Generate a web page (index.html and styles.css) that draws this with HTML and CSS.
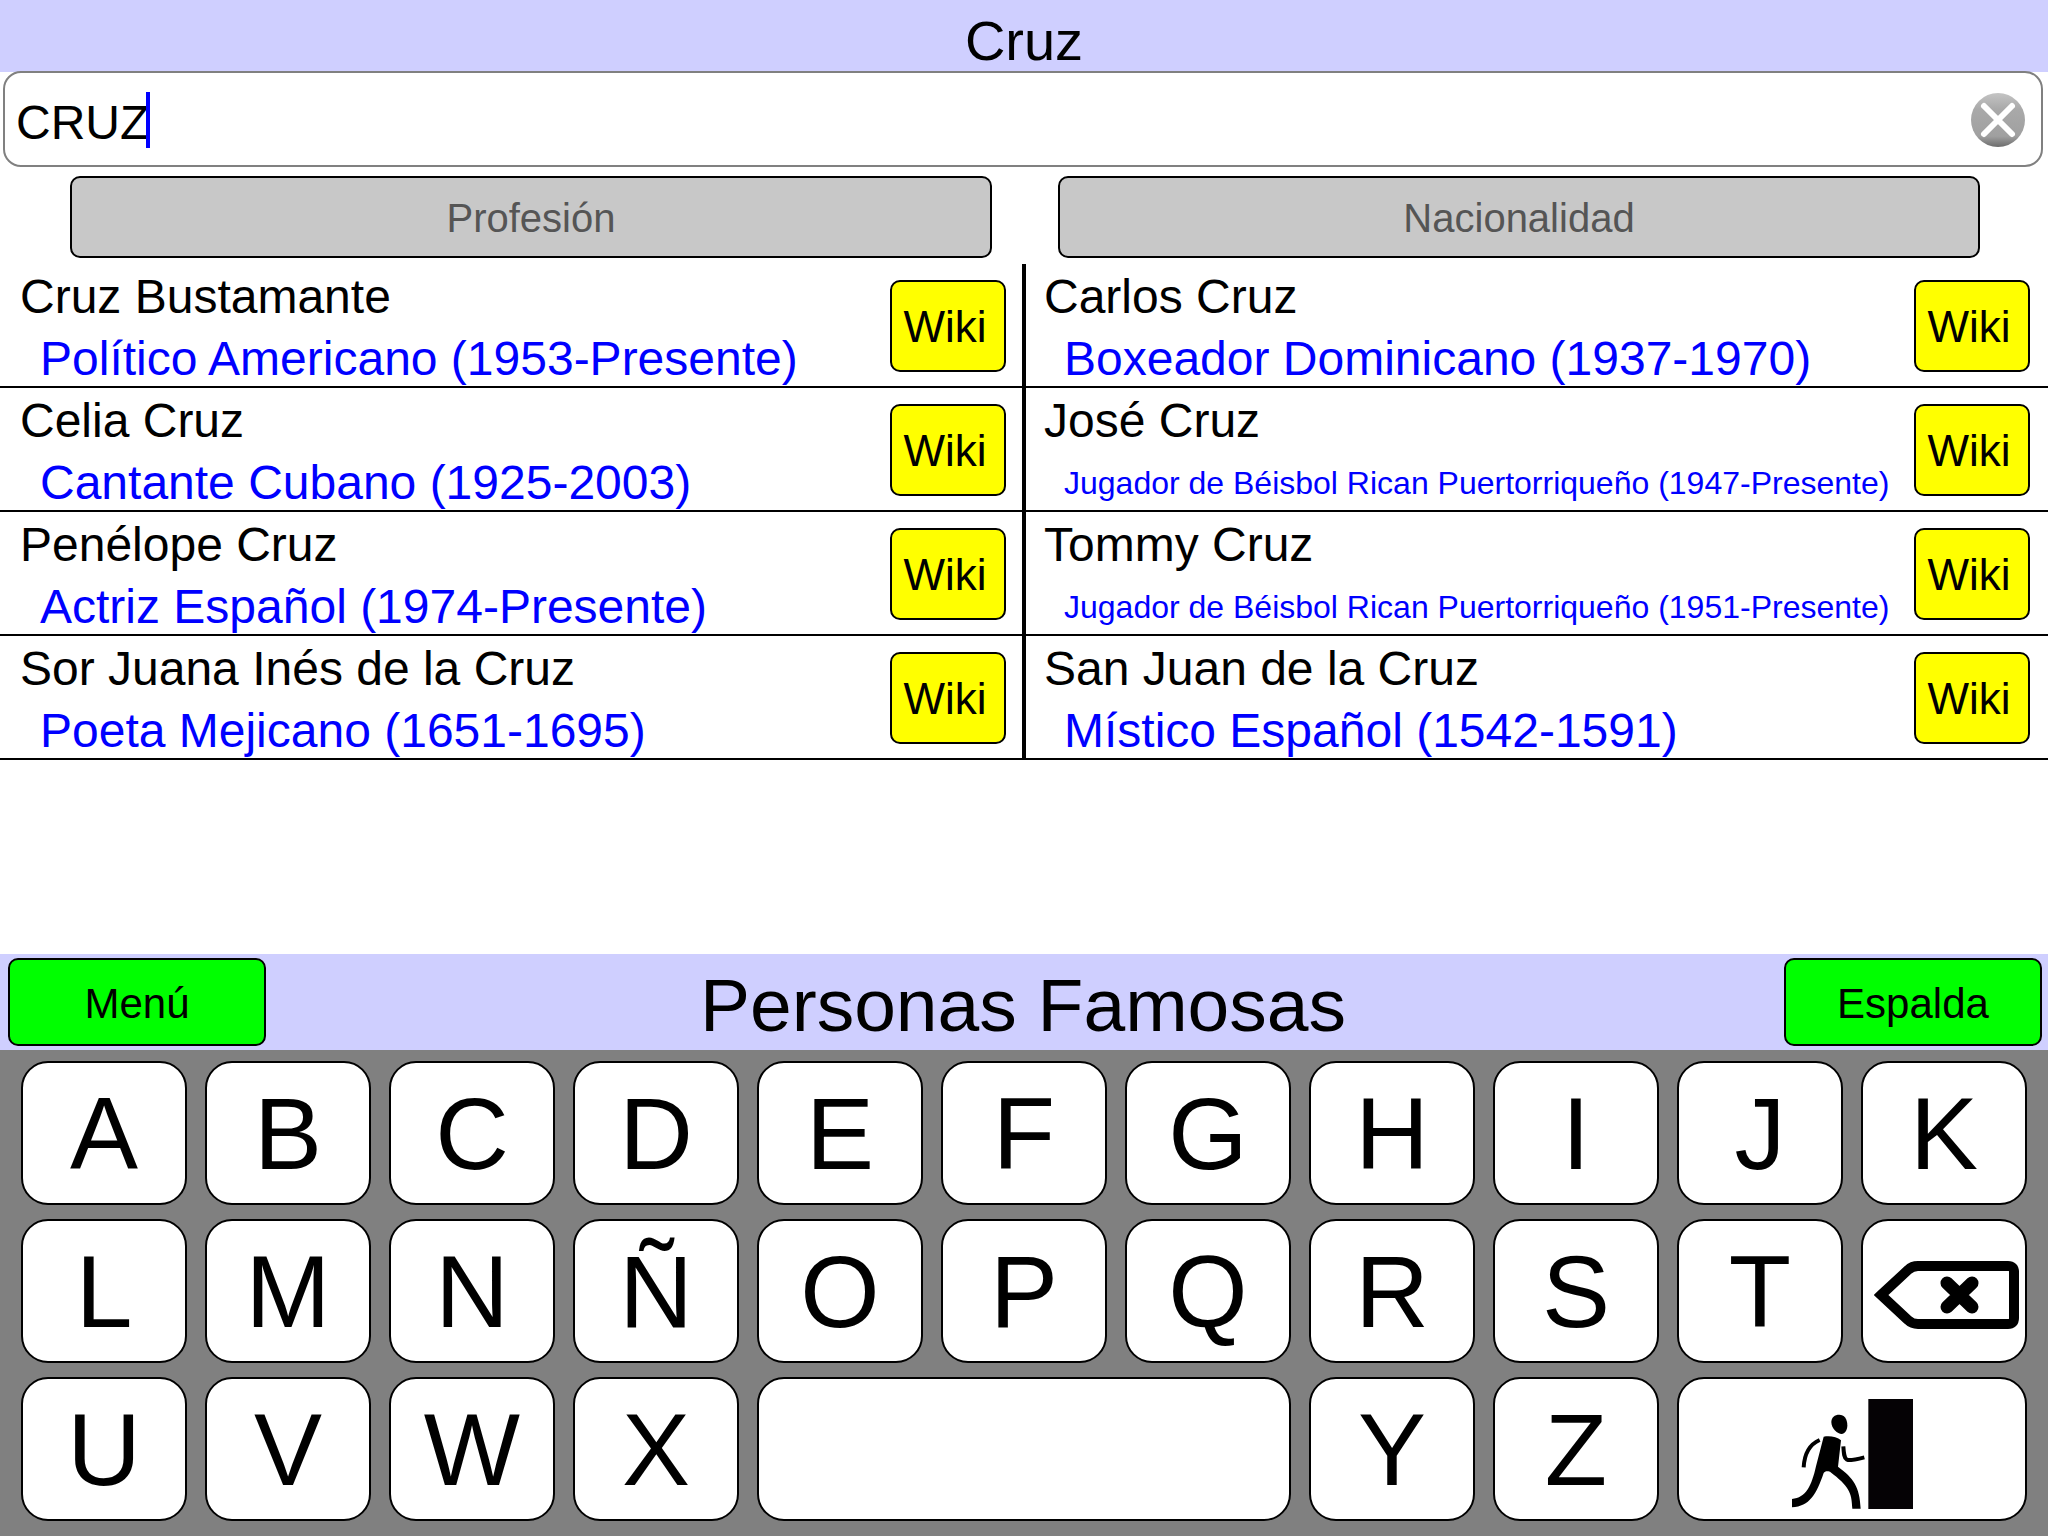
FILE: index.html
```html
<!DOCTYPE html>
<html lang="es">
<head>
    <meta charset="UTF-8">
    <meta name="viewport" content="width=device-width, initial-scale=1.0">
    <title>Personas Famosas</title>
    <link rel="stylesheet" href="styles.css">
</head>
<body>
    <header class="top">
        <h1>Cruz</h1>
    </header>

    <form class="search">
        <input type="text" class="search_txt" value="CRUZ" aria-label="Buscar" autocomplete="off" spellcheck="false">
        <span class="caret"></span>
        <button type="reset" class="clear" aria-label="Borrar">
            <svg viewBox="0 0 56 56">
                <defs>
                    <linearGradient id="gray" x1="0" y1="0" x2="0" y2="1">
                        <stop offset="0" stop-color="#c4c4c4"/>
                        <stop offset="0.3" stop-color="#a9a9a9"/>
                        <stop offset="0.8" stop-color="#a0a0a0"/>
                        <stop offset="1" stop-color="#6c6c6c"/>
                    </linearGradient>
                </defs>
                <circle cx="28" cy="28" r="27" fill="url(#gray)"/>
                <path d="M14 14 L42 42 M42 14 L14 42" stroke="#fff" stroke-width="6" stroke-linecap="round"/>
            </svg>
        </button>
    </form>

    <div class="filter">
        <button type="button" disabled>Profesión</button>
        <button type="button" disabled>Nacionalidad</button>
    </div>

    <main class="result">
        <ul class="lst">
            <li>
                <div class="person"><p class="name">Cruz Bustamante</p><p class="info">Político Americano (1953-Presente)</p></div>
                <button type="button" class="wiki">Wiki</button>
            </li>
            <li>
                <div class="person"><p class="name">Carlos Cruz</p><p class="info">Boxeador Dominicano (1937-1970)</p></div>
                <button type="button" class="wiki">Wiki</button>
            </li>
            <li>
                <div class="person"><p class="name">Celia Cruz</p><p class="info">Cantante Cubano (1925-2003)</p></div>
                <button type="button" class="wiki">Wiki</button>
            </li>
            <li>
                <div class="person"><p class="name">José Cruz</p><p class="info small">Jugador de Béisbol Rican Puertorriqueño (1947-Presente)</p></div>
                <button type="button" class="wiki">Wiki</button>
            </li>
            <li>
                <div class="person"><p class="name">Penélope Cruz</p><p class="info">Actriz Español (1974-Presente)</p></div>
                <button type="button" class="wiki">Wiki</button>
            </li>
            <li>
                <div class="person"><p class="name">Tommy Cruz</p><p class="info small">Jugador de Béisbol Rican Puertorriqueño (1951-Presente)</p></div>
                <button type="button" class="wiki">Wiki</button>
            </li>
            <li>
                <div class="person"><p class="name">Sor Juana Inés de la Cruz</p><p class="info">Poeta Mejicano (1651-1695)</p></div>
                <button type="button" class="wiki">Wiki</button>
            </li>
            <li>
                <div class="person"><p class="name">San Juan de la Cruz</p><p class="info">Místico Español (1542-1591)</p></div>
                <button type="button" class="wiki">Wiki</button>
            </li>
        </ul>
    </main>

    <nav class="bar">
        <button type="button">Menú</button>
        <h2>Personas Famosas</h2>
        <button type="button">Espalda</button>
    </nav>

    <div class="keyboard">
        <button type="button">A</button>
        <button type="button">B</button>
        <button type="button">C</button>
        <button type="button">D</button>
        <button type="button">E</button>
        <button type="button">F</button>
        <button type="button">G</button>
        <button type="button">H</button>
        <button type="button">I</button>
        <button type="button">J</button>
        <button type="button">K</button>

        <button type="button">L</button>
        <button type="button">M</button>
        <button type="button">N</button>
        <button type="button">Ñ</button>
        <button type="button">O</button>
        <button type="button">P</button>
        <button type="button">Q</button>
        <button type="button">R</button>
        <button type="button">S</button>
        <button type="button">T</button>
        <button type="button" class="del" aria-label="Retroceso">
            <svg viewBox="0 0 146 68">
                <path d="M7 34 L34 9 Q38 5 44 5 H134 Q140 5 140 11 V57 Q140 63 134 63 H44 Q38 63 34 59 Z" fill="none" stroke="#000" stroke-width="10"/>
                <path d="M73 22 L98 46 M98 22 L73 46" stroke="#000" stroke-width="13" stroke-linecap="round"/>
            </svg>
        </button>

        <button type="button">U</button>
        <button type="button">V</button>
        <button type="button">W</button>
        <button type="button">X</button>
        <button type="button" class="space" aria-label="Espacio"></button>
        <button type="button">Y</button>
        <button type="button">Z</button>
        <button type="button" class="exit" aria-label="Salir">
            <svg viewBox="452 596 369 334">
                <rect x="684" y="598" width="134" height="330" fill="#050205"/>
                <path d="M597 645 C611 645 621 657 621 677 C621 693 613 703 604 703 C592 703 573 687 573 667 C573 653 583 645 597 645 Z"/>
                <path d="M550 711 C566 708 590 710 602 722 L593 801 C640 836 658 860 661 927 L636 927 C634 876 626 860 569 816 C560 814 554 814 550 820 C528 884 508 920 455 923 L455 898 C497 895 514 858 527 800 Z"/>
                <path d="M538 721 C508 734 492 765 490 803" fill="none" stroke="#000" stroke-width="12"/>
                <path d="M609 740 C612 786 612 788 672 773" fill="none" stroke="#000" stroke-width="12"/>
            </svg>
        </button>
    </div>
</body>
</html>
```
FILE: styles.css
```css
* {margin: 0; padding: 0; box-sizing: border-box;}
body {display: flex; flex-direction: column; min-height: 100vh; background-color: white; color: black;
font-family: "Liberation Sans", Arial, sans-serif;}
button, input {font-family: inherit; color: inherit;}
button {padding-top: 2px; border: 2px solid black; border-radius: 10px; cursor: pointer;}
h1, h2 {font-weight: normal;}
svg {display: block;}

/*제목*/
.top {height: 72px; padding-top: 8px; background-color: #cfcfff; text-align: center;}
.top h1 {font-size: 56px; line-height: 66px;}

/*검색창*/
.search {display: flex; align-items: center; position: relative; height: 96px; margin: -1px 5px 0 3px;
padding: 0 15px 0 11px; border: 2px solid gray; border-radius: 18px; background-color: white;}
.search_txt {flex: 1; min-width: 0; height: 92px; padding-top: 6px; border: none; outline: none; background: none; font-size: 48px;}
/* 커서는 글자 위에 겹친다 */
.caret {position: absolute; left: 141px; top: 19px; width: 4px; height: 56px; background-color: blue;}
.clear {width: 56px; height: 58px; border: none; background: none;}

/*필터 버튼*/
.filter {display: flex; gap: 66px; margin-top: 9px; padding: 0 68px 0 70px;}
.filter button {flex: 1; height: 82px; background-color: #c8c8c8; color: #555; font-size: 40px;}

/*검색 결과*/
.result {flex: 1; padding-top: 6px;}
.lst {display: grid; grid-template-columns: 1fr 1fr; position: relative; list-style: none;}
.lst::after {content: ""; position: absolute; left: 50%; top: 0; bottom: 0; width: 4px; margin-left: -2px; background-color: black;}
.lst li {display: flex; align-items: flex-start; height: 124px; padding: 0 18px 0 20px; border-bottom: 2px solid black;}
.person {flex: 1; min-width: 0; padding-top: 2px; white-space: nowrap;}
.name, .info {font-size: 48px; line-height: 62px;}
.info {padding-left: 20px; color: blue;}
.info.small {font-size: 32px;}
.wiki {flex: none; width: 116px; height: 92px; margin-top: 16px; padding-right: 6px; background-color: yellow; font-size: 44px;}

/*메뉴 바*/
.bar {display: flex; align-items: center; justify-content: space-between; height: 96px; padding: 0 6px 0 8px; background-color: #cfcfff;}
.bar h2 {padding: 6px 4px 0 0; font-size: 75px; line-height: 90px;}
.bar button {width: 258px; height: 88px; padding-top: 4px; background-color: lime; font-size: 42px;}

/*키보드*/
.keyboard {display: grid; grid-template-columns: repeat(11, 1fr); grid-auto-rows: 144px; gap: 14px 18px;
padding: 11px 21px 15px; background-color: gray;}
.keyboard button {border-radius: 27px; background-color: white; font-size: 102px;}
.keyboard svg {margin: 0 auto;}
.keyboard .space {grid-column: span 3;}
.keyboard .exit {grid-column: span 2; padding-top: 10px;}
.keyboard .del {padding: 7px 0 0 5px;}
.del svg {width: 146px; height: 68px;}
.exit svg {width: 123px; height: 112px;}
```
